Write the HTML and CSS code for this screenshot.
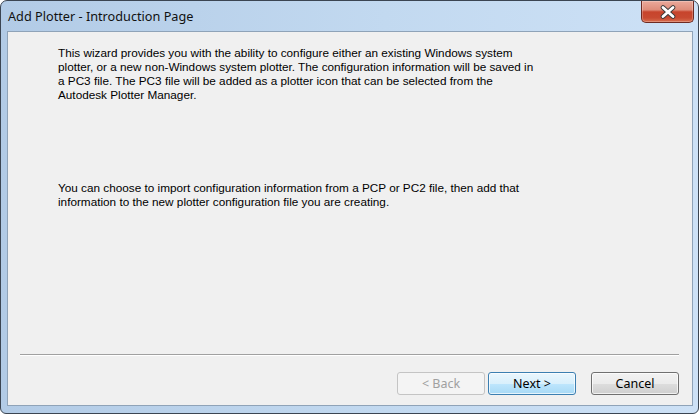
FILE: index.html
```html
<!DOCTYPE html>
<html lang="en">

<head>
  <meta charset="UTF-8" />
  <meta name="viewport" content="width=device-width, initial-scale=1.0" />
  <title>Add Plotter - Introduction Page</title>
  <link rel="stylesheet" href="styles.css">
</head>

<body>
  <div class="window">
    <div class="titlebar">
      <span class="title">Add Plotter - Introduction Page</span>
      <button class="close-btn" title="Close">
        <svg width="16" height="14" viewBox="0 0 16 14">
          <path d="M3 2.5 L13 11.5 M13 2.5 L3 11.5" stroke="#3a3a3a" stroke-width="4.6" stroke-linecap="round" fill="none" />
          <path d="M3 2.5 L13 11.5 M13 2.5 L3 11.5" stroke="#fff" stroke-width="2.8" stroke-linecap="round" fill="none" />
        </svg>
      </button>
    </div>
    <div class="panel">
      <div class="content">
        <!-- 换行位置按原图固定 -->
        <p>This wizard provides you with the ability to configure either an existing Windows system<br>
          plotter, or a new non-Windows system plotter. The configuration information will be saved in<br>
          a PC3 file. The PC3 file will be added as a plotter icon that can be selected from the<br>
          Autodesk Plotter Manager.</p>
        <p class="second">You can choose to import configuration information from a PCP or PC2 file, then add that<br>
          information to the new plotter configuration file you are creating.</p>
      </div>
      <div class="separator"></div>
      <div class="buttons">
        <button class="btn" disabled>&lt; Back</button>
        <button class="btn btn-default">Next &gt;</button>
        <button class="btn btn-cancel">Cancel</button>
      </div>
    </div>
  </div>
</body>

</html>
```

FILE: styles.css
```css
* {
  margin: 0;
  padding: 0;
  box-sizing: border-box;
}

body {
  width: 700px;
  height: 415px;
  overflow: hidden;
  background: #fff;
}

.window {
  width: 699px;
  height: 414px;
  border: 1px solid #3b4552;
  border-radius: 7px 7px 6px 6px;
  background: linear-gradient(to right, #b2cbe6, #c2d9f0 55%, #cde1f6);
  padding: 0 5px 7px 6px;
  display: flex;
  flex-direction: column;
}

.titlebar {
  height: 30px;
  display: flex;
  justify-content: space-between;
  align-items: flex-start;
}

.title {
  font-family: "Noto Sans", "Open Sans", sans-serif;
  font-size: 12.7px;
  color: #111;
  margin-top: 6px;
  padding-left: 1px;
}

.close-btn {
  width: 53px;
  height: 22px;
  margin-right: -1px;
  border: 1px solid #6e2a22;
  border-top: none;
  border-radius: 0 0 5px 5px;
  background: linear-gradient(to bottom, #eaa99b 0%, #de8c7a 42%, #c7442c 52%, #c84a31 80%, #d86e4f 100%);
  box-shadow: inset 0 0 0 1px rgba(255, 255, 255, 0.25);
  display: flex;
  align-items: center;
  justify-content: center;
}

.panel {
  flex: 1;
  border: 1px solid #8fa3b8;
  background: #f0f0f0;
  display: flex;
  flex-direction: column;
}

.content {
  flex: 1;
  padding: 14px 0 0 50px;
  font-family: "Liberation Sans", Arial, sans-serif;
  font-size: 11.75px;
  line-height: 14px;
  color: #000;
}

.content .second {
  margin-top: 79px;
}

.separator {
  margin: 0 13px 0 12px;
  border-top: 1px solid #a0a0a0;
  border-bottom: 1px solid #fff;
}

.buttons {
  display: flex;
  justify-content: flex-end;
  padding: 16px 13px 10px 0;
}

.btn {
  width: 88px;
  height: 23px;
  margin-left: 3px;
  font-family: "Noto Sans", "Open Sans", sans-serif;
  font-size: 12.5px;
  color: #000;
  border: 1px solid #707070;
  border-radius: 3px;
  background: linear-gradient(to bottom, #f2f2f2 0%, #ebebeb 50%, #dddddd 51%, #cfcfcf 100%);
  box-shadow: inset 0 0 0 1px rgba(255, 255, 255, 0.7);
}

.btn:disabled {
  color: #a0a0a0;
  border-color: #c4c4c4;
  background: #f4f4f4;
  box-shadow: none;
}

.btn-default {
  border-color: #3c7fb1;
  background: linear-gradient(to bottom, #eaf6fd 0%, #d9f0fc 50%, #bee6fd 51%, #a7d9f5 100%);
}

.btn-cancel {
  margin-left: 15px;
}
```
